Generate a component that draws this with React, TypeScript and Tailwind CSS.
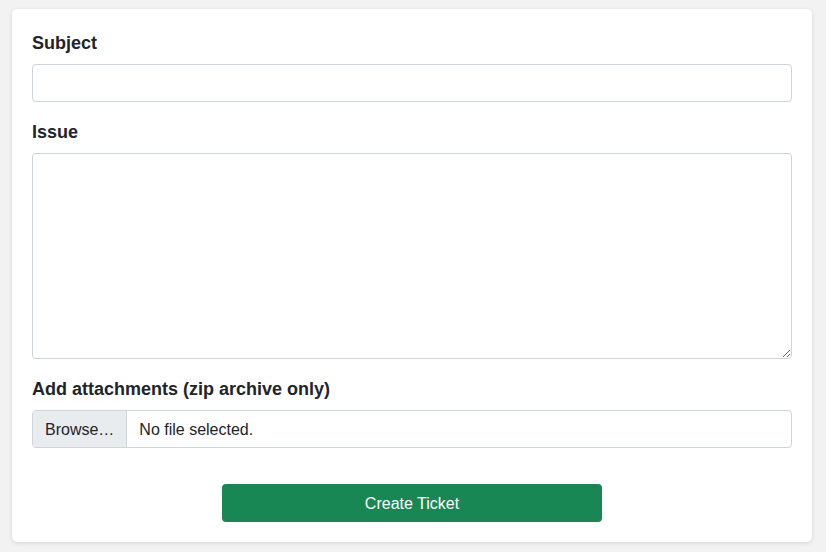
export default function App() {
  return (
    <div
      className="min-h-[552px] bg-[#f2f2f2] pt-[9px] pl-3"
      style={{ fontFamily: '"Liberation Sans", Arial, sans-serif' }}
    >
      <div className="w-[800px] rounded-[5px] bg-white px-5 pt-5 pb-5 text-[#212529] shadow-[0_1px_4px_rgba(0,0,0,0.12)]">
        <label className="mb-[7px] block pt-px text-[18px] leading-[27px] font-bold">Subject</label>
        <input
          type="text"
          className="block h-[38px] w-full rounded border border-[#ced4da] bg-white px-3 text-base outline-none"
        />

        <label className="mt-4 mb-[7px] block pt-px text-[18px] leading-[27px] font-bold">Issue</label>
        <textarea className="block h-[206px] w-full resize-y rounded border border-[#ced4da] bg-white px-3 py-1.5 text-base outline-none" />

        <label className="mt-4 mb-[7px] block pt-px text-[18px] leading-[27px] font-bold">
          Add attachments (zip archive only)
        </label>
        <div className="flex h-[38px] w-full overflow-hidden rounded border border-[#ced4da] text-base">
          <span className="flex items-center border-r border-[#ced4da] bg-[#e9ecef] px-3 pt-px">Browse…</span>
          <span className="flex items-center px-3 pt-px">No file selected.</span>
        </div>

        <div className="mt-9 flex justify-center">
          <button className="h-[38px] w-[380px] rounded bg-[#198754] pt-px text-base text-white">
            Create Ticket
          </button>
        </div>
      </div>
    </div>
  );
}
